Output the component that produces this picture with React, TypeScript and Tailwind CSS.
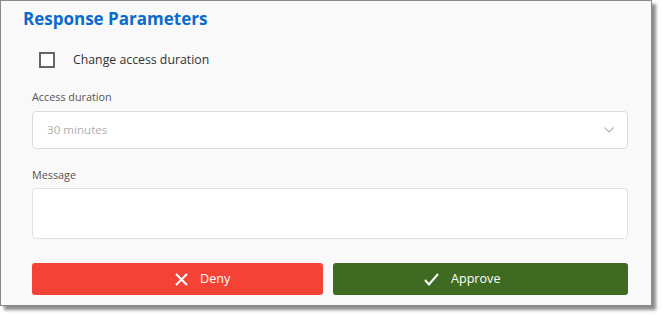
import React from "react";

const font = { fontFamily: '"Open Sans", "Noto Sans", sans-serif' };

const App = () => {
  return (
    <div className="w-[662px] h-[317px] bg-white" style={font}>
      <section className="w-[652px] h-[306px] bg-[#f9f9f9] border border-[#8a8a8a] shadow-[4px_4px_3px_rgba(0,0,0,0.45)] flex flex-col">
        <h1 className="pl-[22px] pt-[6px] text-[17px] leading-[23px] font-bold text-[#0b6bcb]">
          Response Parameters
        </h1>
        <div className="pl-[31px] pr-[23px] flex flex-col">
          <label className="flex items-center gap-[18px] pl-[7px] mt-[21px] h-[18px]">
            <span className="w-[16px] h-[16px] border-2 border-[#666] bg-white" />
            <span className="text-[12.3px] text-[#333]">Change access duration</span>
          </label>
          <div className="mt-[20px] text-[10.8px] leading-[16px] text-[#555]">Access duration</div>
          <div className="mt-[6px] h-[38px] bg-white border border-[#dcdcdc] rounded-[4px] flex items-center justify-between pl-[14px] pr-[12px]">
            <span className="text-[11.6px] text-[#b0b0b0]">30 minutes</span>
            <svg width="12" height="8" viewBox="0 0 12 8" fill="none">
              <path d="M1.5 1.5 L6 6 L10.5 1.5" stroke="#b5b5b5" strokeWidth="1.2" />
            </svg>
          </div>
          <div className="mt-[18px] text-[10.8px] leading-[16px] text-[#555]">Message</div>
          <div className="mt-[5px] h-[51px] bg-white border border-[#e2e2e2] rounded-[4px]" />
          <div className="mt-[24px] flex gap-[10px]">
            <button className="w-[291px] h-[32px] rounded-[3px] bg-[#f44336] text-white text-[12.6px] flex items-center justify-start pl-[143px] gap-[12px]">
              <svg width="13" height="13" viewBox="0 0 13 13">
                <path d="M1 1 L12 12 M12 1 L1 12" stroke="white" strokeWidth="2" />
              </svg>
              Deny
            </button>
            <button className="flex-1 h-[32px] rounded-[3px] bg-[#3e6b21] text-white text-[12.6px] flex items-center justify-start pl-[91px] gap-[12px]">
              <svg width="15" height="13" viewBox="0 0 15 13">
                <path d="M1 7 L5 11.5 L14 1" stroke="white" strokeWidth="2" fill="none" />
              </svg>
              Approve
            </button>
          </div>
        </div>
      </section>
    </div>
  );
};

export default App;
